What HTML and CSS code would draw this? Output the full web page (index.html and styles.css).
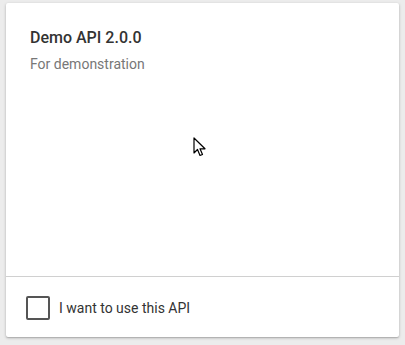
FILE: index.html
```html
<!DOCTYPE html>
<html>
<head>
<meta charset="utf-8">
<link rel="stylesheet" href="styles.css">
</head>
<body>
<div class="card">
  <div class="content">
    <div class="title">Demo API 2.0.0</div>
    <div class="subtitle">For demonstration</div>
  </div>
  <div class="actions">
    <label class="check">
      <span class="box"></span>
      <span class="label">I want to use this API</span>
    </label>
  </div>
</div>
<svg class="cursor" width="14" height="21" viewBox="0 0 14 21">
  <path d="M1 1 L1 16 L4.5 12.5 L7 18.5 L9.5 17.5 L7 11.8 L12 11.8 Z" fill="#fff" stroke="#000" stroke-width="1.2" stroke-linejoin="round"/>
</svg>
</body>
</html>
```
FILE: styles.css
```css
html, body {
  margin: 0;
  padding: 0;
}
body {
  width: 405px;
  height: 345px;
  background: #ececec;
  font-family: Roboto, "Liberation Sans", sans-serif;
  position: relative;
  overflow: hidden;
}
.card {
  position: relative;
  margin: 3px 0 0 6px;
  width: 393px;
  height: 334px;
  background: #fff;
  box-shadow: 0 1px 3px rgba(0,0,0,0.25), 0 1px 1px rgba(0,0,0,0.1);
  border-radius: 2px;
  display: flex;
  flex-direction: column;
}
.content {
  flex: 1;
  padding: 25px 24px 0 24px;
  border-bottom: 1px solid #d0d0d0;
}
.title {
  font-size: 16px;
  font-weight: 500;
  color: #333;
  line-height: 20px;
}
.subtitle {
  margin-top: 7px;
  font-size: 14px;
  color: #777;
  line-height: 18px;
}
.actions {
  height: 60px;
  display: flex;
  align-items: center;
  padding: 0 20px;
}
.check {
  display: flex;
  align-items: center;
  margin-top: 1px;
}
.box {
  width: 20px;
  height: 20px;
  border: 2px solid #555;
  border-radius: 2px;
}
.label {
  margin-left: 9px;
  font-size: 14px;
  color: #333;
}
.cursor {
  position: absolute;
  left: 193px;
  top: 137px;
}
```
